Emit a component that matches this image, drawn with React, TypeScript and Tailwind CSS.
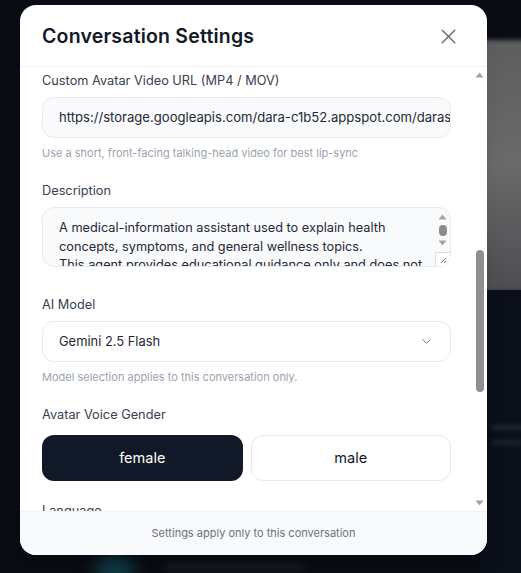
import React, { useLayoutEffect, useRef } from "react";
import { X, ChevronDown } from "lucide-react";

const font = { fontFamily: "Inter, 'Noto Sans', sans-serif" };

function Label({ children, className = "" }: { children: React.ReactNode; className?: string }) {
  return <div className={`text-[12.75px] leading-5 text-[#374151] ${className}`}>{children}</div>;
}

function Helper({ children }: { children: React.ReactNode }) {
  return <div className="mt-[7px] text-[11px] leading-4 text-[#9ca3af]">{children}</div>;
}

function TextInput({ value }: { value: string }) {
  return (
    <div className="flex h-[41px] w-full items-center overflow-hidden whitespace-nowrap rounded-xl border border-[#e8eaee] bg-[#f9fafb] pl-4 pr-[2px] text-[13.1px] text-[#1f2937]">
      {value}
    </div>
  );
}

function Select({ value }: { value: string }) {
  return (
    <div className="flex h-[41px] w-full items-center justify-between rounded-xl border border-[#e8eaee] bg-white pl-4 pr-4 text-[12.9px] text-[#1f2937]">
      <span>{value}</span>
      <ChevronDown size={15} strokeWidth={1.5} className="text-[#6b7280]" />
    </div>
  );
}

function ArrowUp() {
  return (
    <svg width="9" height="6" viewBox="0 0 9 6">
      <path d="M4.5 0.5 L8.5 5.5 L0.5 5.5 Z" fill="#a3a3a3" />
    </svg>
  );
}

function ArrowDown() {
  return (
    <svg width="9" height="6" viewBox="0 0 9 6">
      <path d="M0.5 0.5 L8.5 0.5 L4.5 5.5 Z" fill="#a3a3a3" />
    </svg>
  );
}

export default function App() {
  const scrollRef = useRef<HTMLDivElement>(null);
  const anchorRef = useRef<HTMLDivElement>(null);

  useLayoutEffect(() => {
    const s = scrollRef.current;
    const a = anchorRef.current;
    if (s && a) {
      const top = a.getBoundingClientRect().top - s.getBoundingClientRect().top + s.scrollTop;
      s.scrollTop = top - 4;
    }
  }, []);

  return (
    <div className="relative h-[573px] w-[521px] overflow-hidden bg-[#090c13]" style={font}>
      {/* background page (blurred behind the overlay) */}
      <div className="absolute left-[300px] top-[40px] h-[252px] w-[240px] bg-gradient-to-b from-[#5e5e60] via-[#6a6a6b] to-[#4d4d50] blur-[2px]" />
      <div className="absolute left-[480px] top-[290px] h-[290px] w-[60px] bg-[#0b0f19]" />
      <div className="absolute left-[492px] top-[425px] h-[5px] w-[40px] rounded bg-[#222733] blur-[2px]" />
      <div className="absolute left-[492px] top-[440px] h-[5px] w-[30px] rounded bg-[#1e232e] blur-[2px]" />
      <div className="absolute left-[95px] top-[556px] h-[30px] w-[40px] rounded-full bg-[#0f3a44] blur-[8px]" />
      <div className="absolute left-[165px] top-[562px] h-[8px] w-[140px] rounded bg-[#151a24] blur-[3px]" />

      {/* modal */}
      <div className="absolute left-[20px] top-[5px] flex h-[550px] w-[467px] flex-col overflow-hidden rounded-2xl bg-white shadow-xl">
        <div className="flex h-[62px] shrink-0 items-center justify-between border-b border-[#f0f1f3] pl-[22px] pr-[26px] pt-[2px]">
          <h2 className="text-[19.5px] font-semibold tracking-[0.01em] text-[#111827]">Conversation Settings</h2>
          <X size={25} strokeWidth={1.5} className="text-[#6b7280]" />
        </div>

        <div className="flex min-h-0 flex-1">
          <div ref={scrollRef} className="relative min-w-0 flex-1 overflow-hidden">
            <div className="flex flex-col gap-5 pb-6 pl-[22px] pr-[21px] pt-5">
              <div>
                <Label className="mb-1.5">Agent Name</Label>
                <TextInput value="Dara" />
              </div>
              <div>
                <Label className="mb-2.5">Avatar</Label>
                <div className="grid h-24 grid-cols-4 gap-2">
                  <div className="rounded-xl bg-gray-100" />
                  <div className="rounded-xl bg-gray-100" />
                  <div className="rounded-xl bg-gray-100" />
                  <div className="rounded-xl bg-gray-100" />
                </div>
                <Helper>Choose a preset avatar or provide your own below</Helper>
              </div>
              <div>
                <Label className="mb-1.5">System Prompt</Label>
                <div className="h-[86px] rounded-xl border border-[#e8eaee] bg-[#f9fafb]" />
              </div>

              <div ref={anchorRef}>
                <Label className="mb-1.5">Custom Avatar Video URL (MP4 / MOV)</Label>
                <TextInput value="https://storage.googleapis.com/dara-c1b52.appspot.com/daras/avatar-video.mp4" />
                <Helper>Use a short, front-facing talking-head video for best lip-sync</Helper>
              </div>

              <div>
                <Label className="mb-1.5">Description</Label>
                <div className="mb-[8px] flex h-[60px] w-full overflow-hidden rounded-xl border border-[#e8eaee] bg-[#f9fafb]">
                  <div className="min-w-0 flex-1 pl-4 pr-2 pt-[11px] text-[12.75px] leading-[18.5px] text-[#1f2937]">
                    <p>A medical-information assistant used to explain health concepts, symptoms, and general wellness topics.</p>
                    <p>This agent provides educational guidance only and does not replace professional medical advice.</p>
                  </div>
                  <div className="flex w-[15px] shrink-0 flex-col items-center">
                    <div className="flex h-[15px] items-center justify-center pt-[2px]">
                      <ArrowUp />
                    </div>
                    <div className="mt-[2px] h-[11px] w-[8px] rounded-full bg-[#8c8c8c]" />
                    <div className="flex h-[13px] items-center justify-center">
                      <ArrowDown />
                    </div>
                    <div className="mt-auto flex h-[14px] w-[15px] items-center justify-center border-l border-t border-[#dcdcdc] bg-white">
                      <svg width="8" height="8" viewBox="0 0 8 8">
                        <path d="M7 2 L2 7 M7 5 L5 7" stroke="#777" strokeWidth="1" />
                      </svg>
                    </div>
                  </div>
                </div>
              </div>

              <div>
                <Label className="mb-1.5">AI Model</Label>
                <Select value="Gemini 2.5 Flash" />
                <Helper>Model selection applies to this conversation only.</Helper>
              </div>

              <div>
                <Label className="mb-2.5">Avatar Voice Gender</Label>
                <div className="grid grid-cols-2 gap-2">
                  <div className="flex h-[46px] items-center justify-center rounded-xl bg-[#111827] text-[14.5px] text-white">female</div>
                  <div className="flex h-[46px] items-center justify-center rounded-xl border border-[#e5e7eb] bg-white text-[14.5px] text-[#111827]">male</div>
                </div>
              </div>

              <div>
                <Label className="mb-1.5">Language</Label>
                <Select value="English" />
                <Helper>The avatar will speak and listen in this language.</Helper>
              </div>

              <div>
                <Label className="mb-1.5">Response Length</Label>
                <Select value="Medium" />
              </div>

              <div>
                <Label className="mb-1.5">Greeting Message</Label>
                <TextInput value="Hi, I'm Dara. How can I help you today?" />
              </div>
            </div>
          </div>

          {/* scrollbar */}
          <div className="flex w-[15px] shrink-0 flex-col items-center bg-white">
            <div className="flex h-[16px] items-center justify-center">
              <ArrowUp />
            </div>
            <div className="min-h-0 flex-1">
              <div className="mt-[167px] h-[142px] w-[8px] rounded-full bg-[#8f8f8f]" />
            </div>
            <div className="flex h-[16px] items-center justify-center">
              <ArrowDown />
            </div>
          </div>
        </div>

        <div className="flex h-[44px] shrink-0 items-center justify-center border-t border-[#f0f1f3] bg-[#f9fafb] text-[11px] text-[#6b7280]">
          Settings apply only to this conversation
        </div>
      </div>
    </div>
  );
}
